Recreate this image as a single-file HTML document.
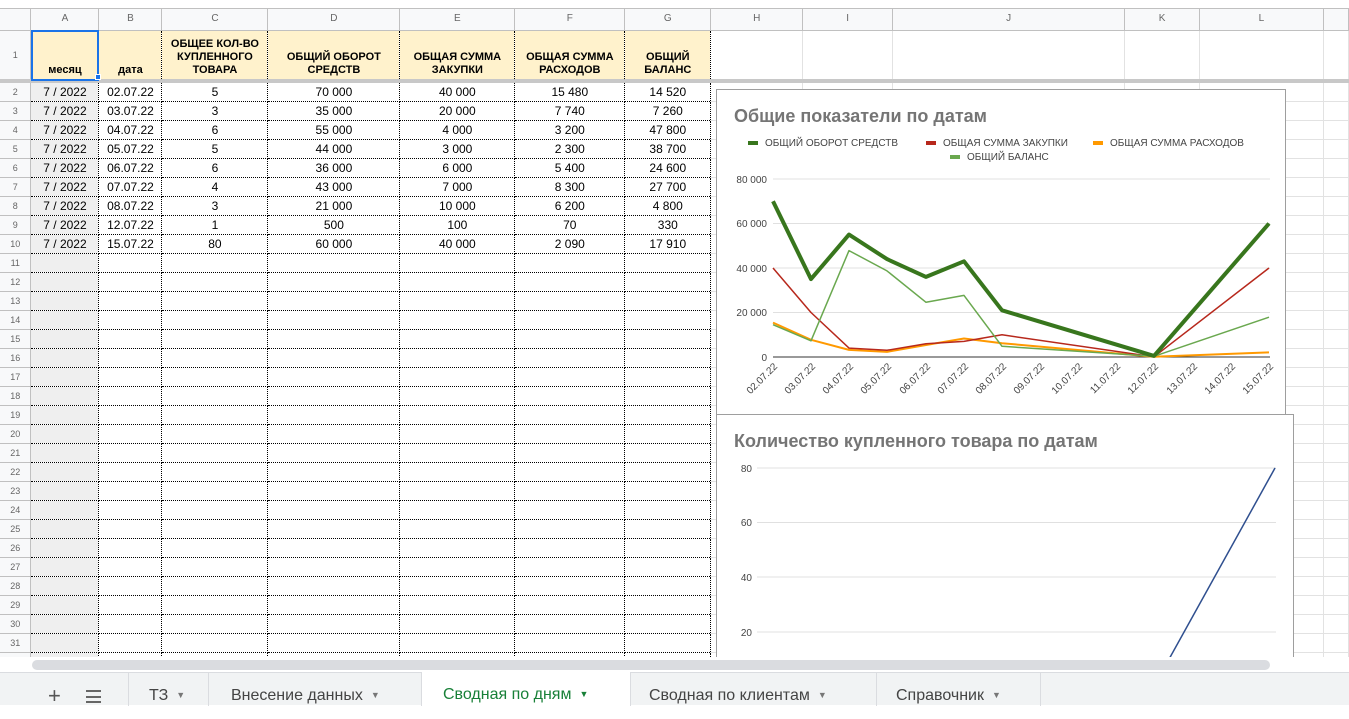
<!DOCTYPE html>
<html><head><meta charset="utf-8">
<style>
*{margin:0;padding:0;box-sizing:border-box}
body{width:1349px;height:705px;overflow:hidden;background:#fff;font-family:"Liberation Sans",Arial,sans-serif;position:relative}
.top{position:absolute;left:0;top:0;width:1349px;height:9px;background:#fff;border-bottom:1px solid #c0c0c0}
table{position:absolute;left:0;top:9px;border-collapse:collapse;table-layout:fixed;font-size:12px;color:#000}
td{overflow:hidden;white-space:nowrap;text-align:center;border-right:1px solid #e2e2e2;border-bottom:1px solid #e2e2e2;height:19px;padding:0;line-height:18px}
tr.ch td{background:#f8f9fa;color:#666;font-size:10px;height:21px;border-right:1px solid #c0c0c0;border-bottom:1px solid #c0c0c0}
td.rn{background:#f8f9fa;color:#666;font-size:9px;border-right:1px solid #c0c0c0;border-bottom:1px solid #c0c0c0}
tr.h1 td{height:51px}
tr.h1 td.y{background:#fff2cc;font-weight:bold;font-size:11px;line-height:13px;vertical-align:bottom;padding-bottom:2px;white-space:normal;border-right:1px dotted #000;border-bottom:4px solid #c8c8c8}
tr.h1 td.rn,tr.h1 td.e{border-bottom:4px solid #c8c8c8}
td.d{border-right:1px dotted #000;border-bottom:1px dotted #000}
td.a{background:#efefef}
.chart{position:absolute;background:#fff;border:1px solid #9e9e9e}
.tabs{position:absolute;left:0;top:672px;width:1349px;height:33px;background:#f1f3f4;border-top:1px solid #dadce0;font-size:16px;color:#444}
.tab{position:absolute;top:0;height:33px;line-height:44px;border-right:1px solid #dadce0}
.ar{font-size:9px;color:#777;margin-left:8px;vertical-align:2px}
</style></head><body>
<div class="top"></div>
<table>
<colgroup><col style="width:31px"><col style="width:68px"><col style="width:63px"><col style="width:106px"><col style="width:132px"><col style="width:115px"><col style="width:110px"><col style="width:86px"><col style="width:92px"><col style="width:90px"><col style="width:232px"><col style="width:75px"><col style="width:124px"><col style="width:25px"></colgroup>
<tr class="ch"><td></td><td>A</td><td>B</td><td>C</td><td>D</td><td>E</td><td>F</td><td>G</td><td>H</td><td>I</td><td>J</td><td>K</td><td>L</td><td></td></tr>
<tr class="h1"><td class="rn">1</td><td class="y" style="outline:2px solid #1a73e8;outline-offset:-2px">месяц</td><td class="y">дата</td><td class="y">ОБЩЕЕ КОЛ-ВО КУПЛЕННОГО ТОВАРА</td><td class="y">ОБЩИЙ ОБОРОТ СРЕДСТВ</td><td class="y">ОБЩАЯ СУММА ЗАКУПКИ</td><td class="y">ОБЩАЯ СУММА РАСХОДОВ</td><td class="y">ОБЩИЙ БАЛАНС</td><td class="e"></td><td class="e"></td><td class="e"></td><td class="e"></td><td class="e"></td><td class="e"></td></tr>
<tr><td class="rn">2</td><td class="d a">7 / 2022</td><td class="d">02.07.22</td><td class="d">5</td><td class="d">70 000</td><td class="d">40 000</td><td class="d">15 480</td><td class="d">14 520</td><td></td><td></td><td></td><td></td><td></td><td></td></tr>
<tr><td class="rn">3</td><td class="d a">7 / 2022</td><td class="d">03.07.22</td><td class="d">3</td><td class="d">35 000</td><td class="d">20 000</td><td class="d">7 740</td><td class="d">7 260</td><td></td><td></td><td></td><td></td><td></td><td></td></tr>
<tr><td class="rn">4</td><td class="d a">7 / 2022</td><td class="d">04.07.22</td><td class="d">6</td><td class="d">55 000</td><td class="d">4 000</td><td class="d">3 200</td><td class="d">47 800</td><td></td><td></td><td></td><td></td><td></td><td></td></tr>
<tr><td class="rn">5</td><td class="d a">7 / 2022</td><td class="d">05.07.22</td><td class="d">5</td><td class="d">44 000</td><td class="d">3 000</td><td class="d">2 300</td><td class="d">38 700</td><td></td><td></td><td></td><td></td><td></td><td></td></tr>
<tr><td class="rn">6</td><td class="d a">7 / 2022</td><td class="d">06.07.22</td><td class="d">6</td><td class="d">36 000</td><td class="d">6 000</td><td class="d">5 400</td><td class="d">24 600</td><td></td><td></td><td></td><td></td><td></td><td></td></tr>
<tr><td class="rn">7</td><td class="d a">7 / 2022</td><td class="d">07.07.22</td><td class="d">4</td><td class="d">43 000</td><td class="d">7 000</td><td class="d">8 300</td><td class="d">27 700</td><td></td><td></td><td></td><td></td><td></td><td></td></tr>
<tr><td class="rn">8</td><td class="d a">7 / 2022</td><td class="d">08.07.22</td><td class="d">3</td><td class="d">21 000</td><td class="d">10 000</td><td class="d">6 200</td><td class="d">4 800</td><td></td><td></td><td></td><td></td><td></td><td></td></tr>
<tr><td class="rn">9</td><td class="d a">7 / 2022</td><td class="d">12.07.22</td><td class="d">1</td><td class="d">500</td><td class="d">100</td><td class="d">70</td><td class="d">330</td><td></td><td></td><td></td><td></td><td></td><td></td></tr>
<tr><td class="rn">10</td><td class="d a">7 / 2022</td><td class="d">15.07.22</td><td class="d">80</td><td class="d">60 000</td><td class="d">40 000</td><td class="d">2 090</td><td class="d">17 910</td><td></td><td></td><td></td><td></td><td></td><td></td></tr>
<tr><td class="rn">11</td><td class="d a"></td><td class="d"></td><td class="d"></td><td class="d"></td><td class="d"></td><td class="d"></td><td class="d"></td><td></td><td></td><td></td><td></td><td></td><td></td></tr>
<tr><td class="rn">12</td><td class="d a"></td><td class="d"></td><td class="d"></td><td class="d"></td><td class="d"></td><td class="d"></td><td class="d"></td><td></td><td></td><td></td><td></td><td></td><td></td></tr>
<tr><td class="rn">13</td><td class="d a"></td><td class="d"></td><td class="d"></td><td class="d"></td><td class="d"></td><td class="d"></td><td class="d"></td><td></td><td></td><td></td><td></td><td></td><td></td></tr>
<tr><td class="rn">14</td><td class="d a"></td><td class="d"></td><td class="d"></td><td class="d"></td><td class="d"></td><td class="d"></td><td class="d"></td><td></td><td></td><td></td><td></td><td></td><td></td></tr>
<tr><td class="rn">15</td><td class="d a"></td><td class="d"></td><td class="d"></td><td class="d"></td><td class="d"></td><td class="d"></td><td class="d"></td><td></td><td></td><td></td><td></td><td></td><td></td></tr>
<tr><td class="rn">16</td><td class="d a"></td><td class="d"></td><td class="d"></td><td class="d"></td><td class="d"></td><td class="d"></td><td class="d"></td><td></td><td></td><td></td><td></td><td></td><td></td></tr>
<tr><td class="rn">17</td><td class="d a"></td><td class="d"></td><td class="d"></td><td class="d"></td><td class="d"></td><td class="d"></td><td class="d"></td><td></td><td></td><td></td><td></td><td></td><td></td></tr>
<tr><td class="rn">18</td><td class="d a"></td><td class="d"></td><td class="d"></td><td class="d"></td><td class="d"></td><td class="d"></td><td class="d"></td><td></td><td></td><td></td><td></td><td></td><td></td></tr>
<tr><td class="rn">19</td><td class="d a"></td><td class="d"></td><td class="d"></td><td class="d"></td><td class="d"></td><td class="d"></td><td class="d"></td><td></td><td></td><td></td><td></td><td></td><td></td></tr>
<tr><td class="rn">20</td><td class="d a"></td><td class="d"></td><td class="d"></td><td class="d"></td><td class="d"></td><td class="d"></td><td class="d"></td><td></td><td></td><td></td><td></td><td></td><td></td></tr>
<tr><td class="rn">21</td><td class="d a"></td><td class="d"></td><td class="d"></td><td class="d"></td><td class="d"></td><td class="d"></td><td class="d"></td><td></td><td></td><td></td><td></td><td></td><td></td></tr>
<tr><td class="rn">22</td><td class="d a"></td><td class="d"></td><td class="d"></td><td class="d"></td><td class="d"></td><td class="d"></td><td class="d"></td><td></td><td></td><td></td><td></td><td></td><td></td></tr>
<tr><td class="rn">23</td><td class="d a"></td><td class="d"></td><td class="d"></td><td class="d"></td><td class="d"></td><td class="d"></td><td class="d"></td><td></td><td></td><td></td><td></td><td></td><td></td></tr>
<tr><td class="rn">24</td><td class="d a"></td><td class="d"></td><td class="d"></td><td class="d"></td><td class="d"></td><td class="d"></td><td class="d"></td><td></td><td></td><td></td><td></td><td></td><td></td></tr>
<tr><td class="rn">25</td><td class="d a"></td><td class="d"></td><td class="d"></td><td class="d"></td><td class="d"></td><td class="d"></td><td class="d"></td><td></td><td></td><td></td><td></td><td></td><td></td></tr>
<tr><td class="rn">26</td><td class="d a"></td><td class="d"></td><td class="d"></td><td class="d"></td><td class="d"></td><td class="d"></td><td class="d"></td><td></td><td></td><td></td><td></td><td></td><td></td></tr>
<tr><td class="rn">27</td><td class="d a"></td><td class="d"></td><td class="d"></td><td class="d"></td><td class="d"></td><td class="d"></td><td class="d"></td><td></td><td></td><td></td><td></td><td></td><td></td></tr>
<tr><td class="rn">28</td><td class="d a"></td><td class="d"></td><td class="d"></td><td class="d"></td><td class="d"></td><td class="d"></td><td class="d"></td><td></td><td></td><td></td><td></td><td></td><td></td></tr>
<tr><td class="rn">29</td><td class="d a"></td><td class="d"></td><td class="d"></td><td class="d"></td><td class="d"></td><td class="d"></td><td class="d"></td><td></td><td></td><td></td><td></td><td></td><td></td></tr>
<tr><td class="rn">30</td><td class="d a"></td><td class="d"></td><td class="d"></td><td class="d"></td><td class="d"></td><td class="d"></td><td class="d"></td><td></td><td></td><td></td><td></td><td></td><td></td></tr>
<tr><td class="rn">31</td><td class="d a"></td><td class="d"></td><td class="d"></td><td class="d"></td><td class="d"></td><td class="d"></td><td class="d"></td><td></td><td></td><td></td><td></td><td></td><td></td></tr>
<tr><td class="rn">32</td><td class="d a"></td><td class="d"></td><td class="d"></td><td class="d"></td><td class="d"></td><td class="d"></td><td class="d"></td><td></td><td></td><td></td><td></td><td></td><td></td></tr>
</table>
<div style="position:absolute;left:95px;top:74px;width:6px;height:6px;background:#1a73e8;border:1px solid #fff"></div>

<div class="chart" style="left:716px;top:89px;width:570px;height:326px"></div>
<svg style="position:absolute;left:0;top:0" width="1349" height="705" font-family="Liberation Sans, Arial, sans-serif">
<text x="734" y="122" font-size="18" font-weight="bold" fill="#757575">Общие показатели по датам</text>
<g font-size="10" fill="#444">
<rect x="748" y="141" width="10" height="4" fill="#38761d"/><text x="765" y="146">ОБЩИЙ ОБОРОТ СРЕДСТВ</text>
<rect x="926" y="141" width="10" height="4" fill="#b7281c"/><text x="943" y="146">ОБЩАЯ СУММА ЗАКУПКИ</text>
<rect x="1093" y="141" width="10" height="4" fill="#ff9900"/><text x="1110" y="146">ОБЩАЯ СУММА РАСХОДОВ</text>
<rect x="950" y="155" width="10" height="4" fill="#6aa84f"/><text x="967" y="160">ОБЩИЙ БАЛАНС</text>
</g>
<g stroke="#e0e0e0" stroke-width="1"><line x1="773" y1="179" x2="1270" y2="179"/><line x1="773" y1="223.5" x2="1270" y2="223.5"/><line x1="773" y1="268" x2="1270" y2="268"/><line x1="773" y1="312.5" x2="1270" y2="312.5"/></g>
<line x1="773" y1="357" x2="1270" y2="357" stroke="#333"/>
<g font-size="10" fill="#444" text-anchor="end"><text x="767" y="183">80 000</text><text x="767" y="227">60 000</text><text x="767" y="272">40 000</text><text x="767" y="316">20 000</text><text x="767" y="361">0</text></g>
<g font-size="10" fill="#444" text-anchor="end">
<text transform="translate(778,367) rotate(-45)">02.07.22</text>
<text transform="translate(816,367) rotate(-45)">03.07.22</text>
<text transform="translate(854,367) rotate(-45)">04.07.22</text>
<text transform="translate(892,367) rotate(-45)">05.07.22</text>
<text transform="translate(931,367) rotate(-45)">06.07.22</text>
<text transform="translate(969,367) rotate(-45)">07.07.22</text>
<text transform="translate(1007,367) rotate(-45)">08.07.22</text>
<text transform="translate(1045,367) rotate(-45)">09.07.22</text>
<text transform="translate(1083,367) rotate(-45)">10.07.22</text>
<text transform="translate(1121,367) rotate(-45)">11.07.22</text>
<text transform="translate(1159,367) rotate(-45)">12.07.22</text>
<text transform="translate(1198,367) rotate(-45)">13.07.22</text>
<text transform="translate(1236,367) rotate(-45)">14.07.22</text>
<text transform="translate(1274,367) rotate(-45)">15.07.22</text>
</g>
<g fill="none" stroke-linejoin="round">
<polyline stroke="#ff9900" stroke-width="2" points="773,322.6 811,339.8 849,349.9 887,351.9 926,345 964,338.5 1002,343.2 1154,356.8 1269,352.4"/>
<polyline stroke="#b7281c" stroke-width="1.5" points="773,268 811,312.5 849,348.1 887,350.3 926,343.7 964,341.4 1002,334.8 1154,356.8 1269,268"/>
<polyline stroke="#6aa84f" stroke-width="1.5" points="773,324.7 811,340.8 849,250.6 887,270.9 926,302.3 964,295.4 1002,346.3 1154,356.3 1269,317.2"/>
<polyline stroke="#38761d" stroke-width="4" points="773,201.3 811,279.1 849,234.6 887,259.1 926,276.9 964,261.3 1002,310.3 1154,355.9 1269,223.5"/>
</g>
</svg>

<div class="chart" style="left:716px;top:414px;width:578px;height:250px"></div>
<svg style="position:absolute;left:0;top:0" width="1349" height="660" font-family="Liberation Sans, Arial, sans-serif">
<text x="734" y="447" font-size="18" font-weight="bold" fill="#757575">Количество купленного товара по датам</text>
<g stroke="#e0e0e0"><line x1="757" y1="468" x2="1276" y2="468"/><line x1="757" y1="522.5" x2="1276" y2="522.5"/><line x1="757" y1="577" x2="1276" y2="577"/><line x1="757" y1="632" x2="1276" y2="632"/></g>
<g font-size="10" fill="#444" text-anchor="end"><text x="752" y="472">80</text><text x="752" y="526">60</text><text x="752" y="581">40</text><text x="752" y="636">20</text></g>
<line x1="1163" y1="670" x2="1275" y2="468" stroke="#2f4f8f" stroke-width="1.5"/>
</svg>

<div style="position:absolute;left:0;top:657px;width:1349px;height:15px;background:#fff"></div>
<div style="position:absolute;left:32px;top:660px;width:1238px;height:10px;background:#dadce0;border-radius:5px"></div>
<div class="tabs">
<div style="position:absolute;left:48px;top:0;line-height:46px;font-size:22px;color:#555">+</div>
<div style="position:absolute;left:86px;top:17px;width:15px;height:13px;border-top:2px solid #666;border-bottom:2px solid #666"><div style="margin-top:3.5px;height:2px;background:#666"></div></div>
<div class="tab" style="left:128px;width:1px"></div>
<div class="tab" style="left:129px;width:80px;padding-left:20px">ТЗ<span class="ar">▼</span></div>
<div class="tab" style="left:209px;width:213px;padding-left:22px">Внесение данных<span class="ar">▼</span></div>
<div class="tab" style="left:422px;width:209px;padding-left:21px;background:#fff;color:#188038;top:-1px;height:34px">Сводная по дням<span class="ar" style="color:#188038">▼</span></div>
<div class="tab" style="left:631px;width:246px;padding-left:18px">Сводная по клиентам<span class="ar">▼</span></div>
<div class="tab" style="left:877px;width:164px;padding-left:19px">Справочник<span class="ar">▼</span></div>
</div>
</body></html>
